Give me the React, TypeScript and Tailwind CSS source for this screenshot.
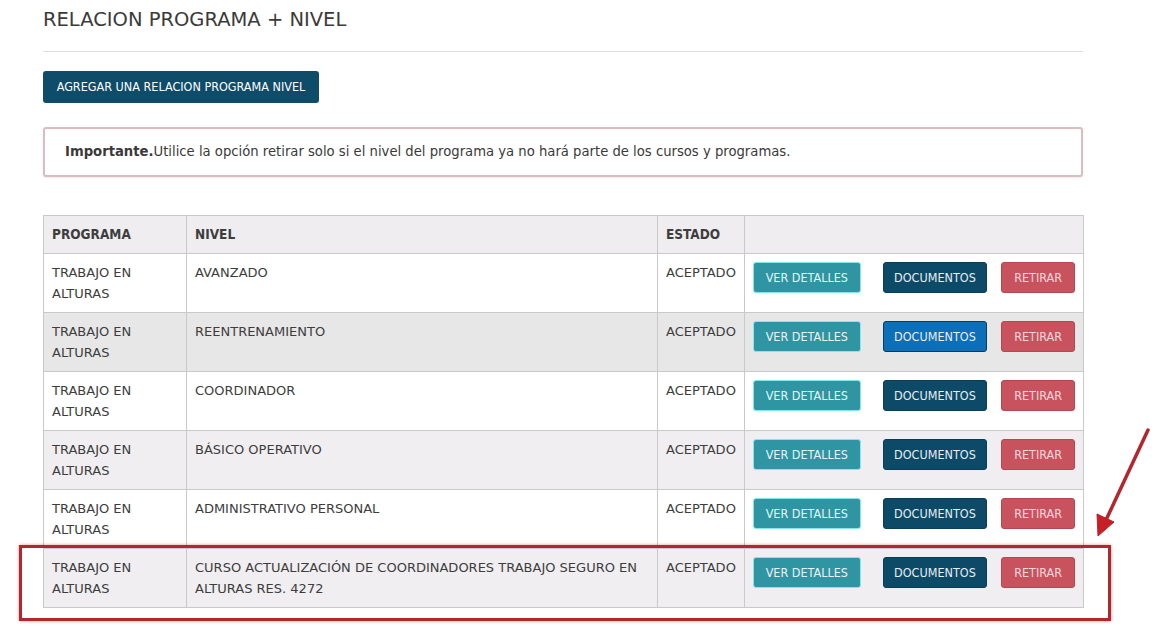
import React from "react";

type Row = {
  programa: string;
  nivel: string;
  estado: string;
  bg: string;
  docHover?: boolean;
};

const ROWS: Row[] = [
  { programa: "TRABAJO EN ALTURAS", nivel: "AVANZADO", estado: "ACEPTADO", bg: "bg-white" },
  { programa: "TRABAJO EN ALTURAS", nivel: "REENTRENAMIENTO", estado: "ACEPTADO", bg: "bg-[#e8e7e8]", docHover: true },
  { programa: "TRABAJO EN ALTURAS", nivel: "COORDINADOR", estado: "ACEPTADO", bg: "bg-white" },
  { programa: "TRABAJO EN ALTURAS", nivel: "BÁSICO OPERATIVO", estado: "ACEPTADO", bg: "bg-[#f0eef1]" },
  { programa: "TRABAJO EN ALTURAS", nivel: "ADMINISTRATIVO PERSONAL", estado: "ACEPTADO", bg: "bg-white" },
  {
    programa: "TRABAJO EN ALTURAS",
    nivel: "CURSO ACTUALIZACIÓN DE COORDINADORES TRABAJO SEGURO EN ALTURAS RES. 4272",
    estado: "ACEPTADO",
    bg: "bg-[#f0eef1]",
  },
];

// condensed face for buttons and table headers, regular face for body text
const CONDENSED = "font-['DejaVu_Sans_Condensed','DejaVu_Sans',sans-serif] font-stretch-condensed";
const cell = "border border-[#c9c9c9] px-[8px] py-[8px] align-top";

export default function App() {
  return (
    <div className="relative min-h-[627px] w-[1159px] bg-white font-['DejaVu_Sans',sans-serif] text-[#3a3a3a]">
      <div className="ml-[43px] w-[1040px] pt-[8px]">
        <h1 className="text-[19.5px] leading-[24px] text-[#3a3a3a]">RELACION PROGRAMA + NIVEL</h1>
        <hr className="mt-[19px] border-t border-[#dedede]" />

        <button className={`mt-[19px] h-[32px] w-[276px] rounded-[3px] bg-[#0e4c6a] text-[12.5px] text-white ${CONDENSED}`}>
          AGREGAR UNA RELACION PROGRAMA NIVEL
        </button>

        <div className="mt-[24px] flex h-[50px] items-center rounded-[3px] border-2 border-[#dcbcc1] px-[20px] text-[13.2px] text-[#3a3a3a] shadow-[0_1px_2px_rgba(0,0,0,0.08)]">
          <p>
            <b>Importante.</b>Utilice la opción retirar solo si el nivel del programa ya no hará parte de los cursos y programas.
          </p>
        </div>

        <table className="mt-[38px] w-[1040px] table-fixed border-collapse text-[13px] leading-[21px] text-[#3d3d3d]">
          <colgroup>
            <col className="w-[143px]" />
            <col className="w-[471px]" />
            <col className="w-[87px]" />
            <col className="w-[339px]" />
          </colgroup>
          <thead className={CONDENSED}>
            <tr className="h-[38px] bg-[#efedef]">
              <th className="border border-[#c9c9c9] px-[8px] text-left text-[13.5px] font-bold">PROGRAMA</th>
              <th className="border border-[#c9c9c9] px-[8px] text-left text-[13.5px] font-bold">NIVEL</th>
              <th className="border border-[#c9c9c9] px-[8px] text-left text-[13.5px] font-bold">ESTADO</th>
              <th className="border border-[#c9c9c9]"></th>
            </tr>
          </thead>
          <tbody>
            {ROWS.map((r, i) => (
              <tr key={i} className={r.bg}>
                <td className={cell}>{r.programa}</td>
                <td className={cell}>{r.nivel}</td>
                <td className={cell}>{r.estado}</td>
                <td className={cell}>
                  <div className={`flex items-start ${CONDENSED}`}>
                    <button className="h-[31px] w-[108px] rounded-[3px] border border-[#86e6ef] bg-[#2f95a3] text-[12.5px] text-[#e6f4f6]">
                      VER DETALLES
                    </button>
                    <button
                      className={`ml-[22px] h-[31px] w-[105px] rounded-[3px] border border-[#0a3d57] text-[12.5px] text-[#e8eef2] ${
                        r.docHover ? "bg-[#0b6fba]" : "bg-[#0c4a68]"
                      }`}
                    >
                      DOCUMENTOS
                    </button>
                    <button className="ml-[14px] h-[31px] w-[74px] rounded-[3px] border border-[#b9464f] bg-[#c8535f] text-[12.5px] text-[#f6d6da]">
                      RETIRAR
                    </button>
                  </div>
                </td>
              </tr>
            ))}
          </tbody>
        </table>
      </div>

      {/* annotation: red highlight box + arrow */}
      <div className="pointer-events-none absolute left-[19px] top-[545px] h-[76px] w-[1092px] border-[3px] border-[#b3262c] shadow-[0_0_3px_rgba(200,40,40,0.5)]" />
      <svg
        className="pointer-events-none absolute left-[1088px] top-[424px]"
        width="70"
        height="116"
        viewBox="0 0 70 116"
      >
        <line x1="60" y1="6" x2="18" y2="96" stroke="#b3262c" strokeWidth="3.5" strokeLinecap="round" />
        <polygon points="10,112 9,90 26,98" fill="#c81e26" stroke="#b3262c" strokeWidth="1" />
      </svg>
    </div>
  );
}
